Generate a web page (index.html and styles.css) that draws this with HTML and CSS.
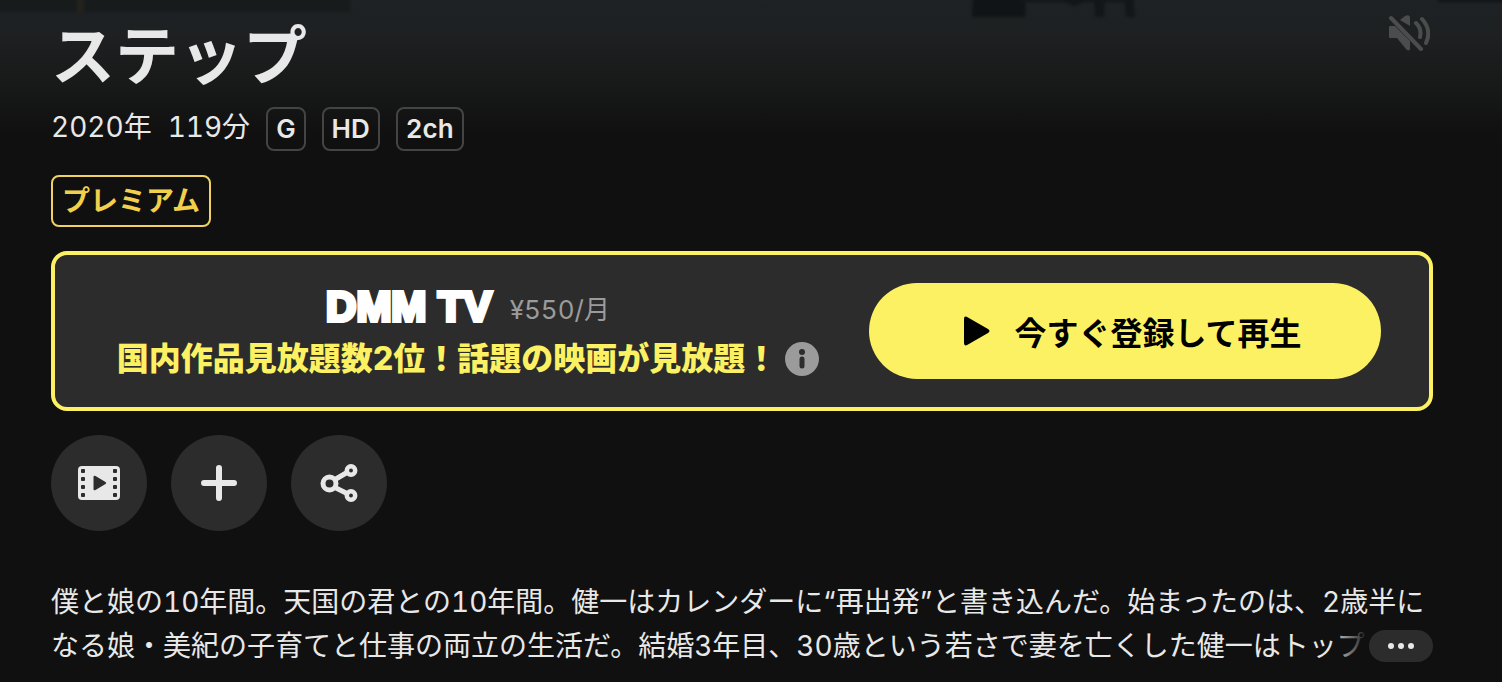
FILE: index.html
```html
<!DOCTYPE html>
<html lang="ja">
<head>
	<meta charset="UTF-8">
	<meta name="viewport" content="width=device-width, initial-scale=1">
	<title>ステップ</title>
	<link rel="stylesheet" href="styles.css">
</head>

<body>
	<!-- bottom edge of the key visual, fading into the page -->
	<svg class="backdrop" viewBox="0 0 1502 140" preserveAspectRatio="none" aria-hidden="true">
		<defs>
			<linearGradient id="fade" x1="0" y1="0" x2="0" y2="1">
				<stop offset="0" stop-color="#1d2225"/>
				<stop offset="0.25" stop-color="#1e2021"/>
				<stop offset="0.6" stop-color="#181919"/>
				<stop offset="0.92" stop-color="#111111"/>
				<stop offset="1" stop-color="#101010"/>
			</linearGradient>
			<filter id="soft" color-interpolation-filters="sRGB"><feGaussianBlur stdDeviation="1.5"/></filter>
		</defs>
		<rect width="1502" height="140" fill="url(#fade)"/>
		<g filter="url(#soft)">
			<path d="M-5 -5H350V12H-5z" fill="#171b1c"/>
			<path d="M77 -5h7v17h-7z" fill="#23221c"/>
			<path d="M973 -5h53l-1 22h-53z" fill="#111416"/>
			<path d="M1020 -5h114v7h-50l-10 4-10-4h-44z" fill="#131618"/>
			<path d="M1094 -3h11l-1 20h-9zM1124 -3h9l2 20h-9z" fill="#131618"/>
			<path d="M1436 -5h71v7h-68z" fill="#101415"/>
		</g>
	</svg>

	<button class="mute" type="button" aria-label="ミュート解除">
		<svg width="42" height="36" viewBox="0 0 42 36">
			<path d="M1 12q0-1 1-1h5L22 26v8q-1 3-4 0l-9-11H2q-1 0-1-1z" fill="currentColor"/>
			<path d="M12 5l5-4q5-2 5 2v8z" fill="currentColor"/>
			<path d="M3 3l30 31" fill="none" stroke="currentColor" stroke-width="4" stroke-linecap="round"/>
			<path d="M28 8q6 6 4 14M34 4q10 11 4 24" fill="none" stroke="currentColor" stroke-width="4" stroke-linecap="round"/>
		</svg>
	</button>

	<main class="detail">
		<h1 class="title">ステップ</h1>

		<div class="meta">
			<span class="meta-text">2020年</span>
			<span class="meta-text">119分</span>
			<span class="badge">G</span>
			<span class="badge">HD</span>
			<span class="badge">2ch</span>
		</div>

		<span class="premium">プレミアム</span>

		<section class="promo">
			<div class="promo-text">
				<div class="promo-brand">
					<span class="logo">DMM TV</span>
					<span class="price">¥550/月</span>
				</div>
				<div class="promo-copy">
					<span>国内作品見放題数2位！話題の映画が見放題！</span>
					<button class="info" type="button" aria-label="詳細">
						<svg width="34" height="34" viewBox="0 0 34 34">
							<circle cx="17" cy="17" r="17" fill="#9b9b9b"/>
							<circle cx="17" cy="10" r="3" fill="#2c2c2c"/>
							<path d="M17 17v7" stroke="#2c2c2c" stroke-width="5" stroke-linecap="round"/>
						</svg>
					</button>
				</div>
			</div>
			<a class="play" href="#">
				<svg width="26" height="30" viewBox="0 0 26 30">
					<path d="M0 3Q0-1 4 1.500L24 13Q27 15 24 17L4 28.500Q0 31 0 27z"/>
				</svg>
				<span>今すぐ登録して再生</span>
			</a>
		</section>

		<div class="actions">
			<button class="action" type="button" aria-label="予告編">
				<svg width="42" height="34" viewBox="0 0 42 34">
					<rect width="42" height="34" rx="4" fill="#e8e8e8"/>
					<path d="M15.500 11q0-2 2-1l10 6q1.500 1 0 2l-10 6q-2 1-2-1z" fill="#2c2c2c"/>
					<g fill="#2c2c2c">
						<rect x="3" y="3" width="4" height="4" rx="1"/>
						<rect x="3" y="11" width="4" height="4" rx="1"/>
						<rect x="3" y="19" width="4" height="4" rx="1"/>
						<rect x="3" y="27" width="4" height="4" rx="1"/>
						<rect x="35" y="3" width="4" height="4" rx="1"/>
						<rect x="35" y="11" width="4" height="4" rx="1"/>
						<rect x="35" y="19" width="4" height="4" rx="1"/>
						<rect x="35" y="27" width="4" height="4" rx="1"/>
					</g>
				</svg>
			</button>
			<button class="action" type="button" aria-label="リストに追加">
				<svg width="36" height="36" viewBox="0 0 36 36">
					<path d="M18 3v30M3 18h30" stroke="#e8e8e8" stroke-width="6" stroke-linecap="round"/>
				</svg>
			</button>
			<button class="action" type="button" aria-label="共有">
				<svg width="38" height="38" viewBox="0 0 38 38" fill="none" stroke="#e8e8e8">
					<circle cx="9.500" cy="19.500" r="6.500" stroke-width="5"/>
					<circle cx="31" cy="6.500" r="4.200" stroke-width="4.500"/>
					<circle cx="31" cy="31.500" r="4.200" stroke-width="4.500"/>
					<path d="M15 15.500l12-7M15 23.500l12 6" stroke-width="5"/>
				</svg>
			</button>
		</div>

		<div class="story">
			<p class="story-text">僕と娘の10年間。天国の君との10年間。健一はカレンダーに“再出発”と書き込んだ。始まったのは、2歳半になる娘・美紀の子育てと仕事の両立の生活だ。結婚3年目、30歳という若さで妻を亡くした健一はトップ</p>
			<div class="story-fade">
				<button class="more" type="button" aria-label="もっと見る">
					<svg width="26" height="6" viewBox="0 0 26 6" fill="#e8e8e8">
						<circle cx="3" cy="3" r="3"/>
						<circle cx="13" cy="3" r="3"/>
						<circle cx="23" cy="3" r="3"/>
					</svg>
				</button>
			</div>
		</div>
	</main>
</body>

</html>
```

FILE: styles.css
```css
* {
	box-sizing: border-box;
}
body {
	margin: 0;
	position: relative;
	background: #101010;
	color: #e8e8e8;
	font-family: "Inter", "Noto Sans CJK JP", sans-serif;
	font-size: 28px;
	font-variant-numeric: tabular-nums;
}
button {
	display: flex;
	align-items: center;
	justify-content: center;
	padding: 0;
	border: 0;
	background: none;
	color: inherit;
	cursor: pointer;
}
svg {
	display: block;
	flex: none;
}
.backdrop {
	position: absolute;
	top: 0;
	left: 0;
	width: 100%;
	height: 140px;
}
.mute {
	position: absolute;
	z-index: 1;
	top: 15px;
	right: 72px;
	color: #4b4d4d;
}
.detail {
	position: relative;
	padding: 16px 69px 16px 51px;
}
.title {
	margin: 0 0 11px;
	font-size: 64px;
	line-height: 80px;
	font-weight: 700;
}
.meta {
	display: flex;
	gap: 16px;
	line-height: 40px;
}
.badge {
	padding: 0 8px;
	border: 2px solid #444;
	border-radius: 8px;
	font-size: 26px;
	font-weight: 600;
}
.premium {
	display: block;
	width: fit-content;
	margin: 24px 0;
	padding: 0 9px;
	border: 2px solid #f0d264;
	border-radius: 8px;
	color: #f2d04b;
	font-weight: 700;
	line-height: 48px;
}

/* sign-up banner */
.promo {
	display: flex;
	align-items: center;
	gap: 32px;
	padding: 24px 48px 24px 44px;
	border: 4px solid #fcf162;
	border-radius: 16px;
	background: #2c2c2c;
}
.promo-text {
	flex: 1;
}
.promo-brand,
.promo-copy {
	display: flex;
	align-items: center;
	justify-content: center;
}
.promo-brand {
	gap: 18px;
	height: 56px;
}
.logo {
	color: #fff;
	font-family: "Liberation Sans", sans-serif;
	font-size: 42px;
	font-weight: 700;
	line-height: 56px;
	-webkit-text-stroke: 4px #fff;
}
.price {
	color: #9b9b9b;
	font-size: 26px;
}
.promo-copy {
	gap: 8px;
	color: #fcf162;
	font-size: 32px;
	font-weight: 800;
	line-height: 48px;
	white-space: nowrap;
}
.play {
	display: flex;
	align-items: center;
	justify-content: center;
	gap: 24px;
	flex: 0 1 512px;
	height: 96px;
	padding-left: 16px;
	border-radius: 48px;
	background: #fcf162;
	color: #000;
	font-size: 32px;
	font-weight: 700;
	text-decoration: none;
}

.actions {
	display: flex;
	gap: 24px;
	margin: 24px 0 49px;
}
.action {
	width: 96px;
	height: 96px;
	border-radius: 50%;
	background: #2c2c2c;
}

/* synopsis, cut after two lines */
.story {
	position: relative;
	height: 88px;
	overflow: hidden;
}
.story-text {
	margin: 0;
	line-height: 44px;
}
.story-fade {
	position: absolute;
	right: 0;
	bottom: 0;
	display: flex;
	align-items: center;
	height: 44px;
	padding-left: 40px;
	background: linear-gradient(to right, transparent, #101010 40px);
}
.more {
	width: 64px;
	height: 32px;
	border-radius: 16px;
	background: #2c2c2c;
}
```
